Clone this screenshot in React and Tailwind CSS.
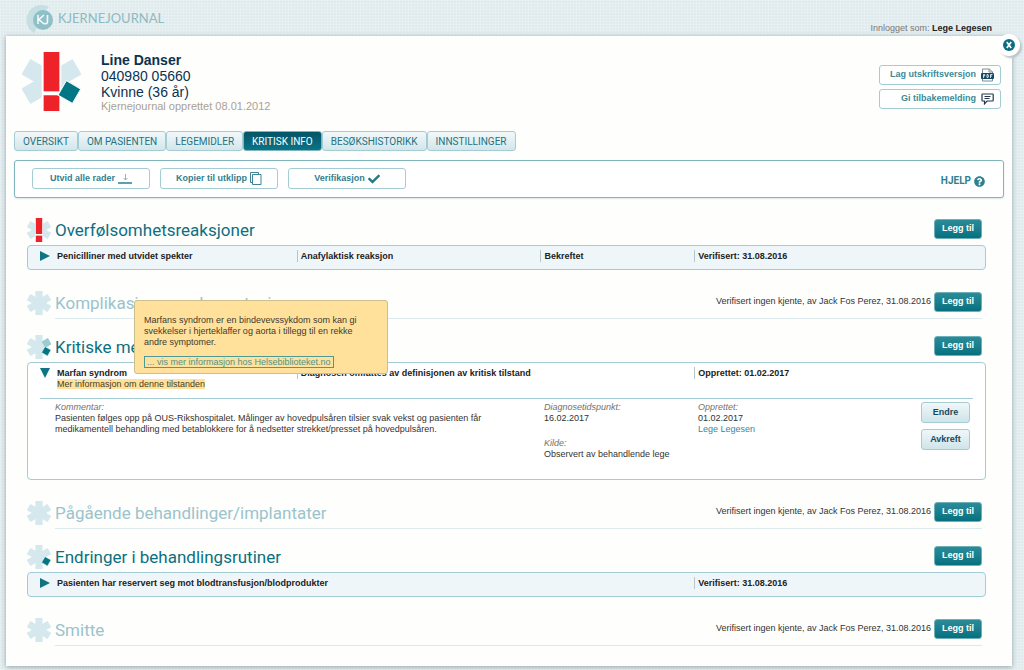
import React, { useState } from "react";
import { FaCheck, FaQuestionCircle } from "react-icons/fa";

const TABS = [
  "OVERSIKT",
  "OM PASIENTEN",
  "LEGEMIDLER",
  "KRITISK INFO",
  "BESØKSHISTORIKK",
  "INNSTILLINGER",
];

const NONE_KNOWN = "Verifisert ingen kjente, av Jack Fos Perez, 31.08.2016";

function Asterisk({ className, alert, marked, double }) {
  return (
    <svg viewBox="0 0 60 60" className={className} aria-hidden="true">
      <g fill="#d5e8ed">
        {!alert && <rect x="21" y="0" width="18" height="60" />}
        <rect x="21" y="0" width="18" height="60" transform="rotate(60 30 30)" />
        <rect x="21" y="0" width="18" height="60" transform="rotate(120 30 30)" />
      </g>
      {alert && (
        <g>
          <rect x="20" y="0" width="20" height="60" fill="#fff" />
          <rect x="22" y="0" width="16" height="40" fill="#ee2229" />
          <rect x="22" y="44" width="16" height="16" fill="#ee2229" />
        </g>
      )}
      {double && (
        <rect x="40" y="11" width="18" height="18" fill="#9ccbd2" transform="rotate(-30 49 20)" />
      )}
      {marked && (
        <rect x="40" y="32" width="17" height="17" fill="#037685" stroke="#fff" strokeWidth="1" transform="rotate(30 48 40)" />
      )}
    </svg>
  );
}

function Logo() {
  return (
    <div className="flex items-center">
      <svg viewBox="0 0 32 32" className="size-8" aria-hidden="true">
        <path d="M23 4A14.500 14.500 0 1 0 8 30l3-5A10 10 0 0 1 19 8z" fill="#c5dfe2" />
        <circle cx="17" cy="17" r="10" fill="#8fc0c8" />
        <path d="M12 12v9M18 12l-5 4.500 5 4.500M21.500 12v6.500q0 3-3.500 2" fill="none" stroke="#f2f9fa" strokeWidth="1.600" />
      </svg>
      <span className="font-['Lato'] text-[13px] text-[#8dbac3]">KJERNEJOURNAL</span>
    </div>
  );
}

function PdfIcon() {
  return (
    <svg viewBox="0 0 13 14" className="h-[14px] w-[13px]" aria-hidden="true">
      <path d="M1.500 1h7l3 3v9h-10z" fill="#fff" stroke="#7d8d95" />
      <path d="M8 1v3h3.500" fill="none" stroke="#7d8d95" />
      <rect x="0" y="5" width="13" height="6" rx="1" fill="#164a61" />
      <path d="M2.500 10V6.500h1.200v1.500H2.500M6 6.500v3h1q1-1.500 0-3zM9.500 10V6.500h2M9.500 8h1.500" fill="none" stroke="#fff" strokeWidth=".8" />
    </svg>
  );
}

function SpeechIcon() {
  return (
    <svg viewBox="0 0 13 12" className="h-3 w-[13px]" fill="none" stroke="#25364a" aria-hidden="true">
      <path d="M1.500 1h10q.7 0 .7.700v5.600q0 .7-.7.700H6l-2.500 2.800V8h-2Q1 8 1 7.300V1.700Q1 1 1.500 1z" strokeWidth="1.200" />
      <path d="M3.500 3.500h6M3.500 5.500h5" />
    </svg>
  );
}

function ExpandIcon() {
  return (
    <svg viewBox="0 0 14 12" className="h-3 w-[14px]" aria-hidden="true">
      <path d="M7.500 1v6M5.500 5l2 2 2-2" fill="none" stroke="#a9a9a9" />
      <rect x="0" y="9" width="14" height="2" fill="#5aa3ad" />
    </svg>
  );
}

function CopyIcon() {
  return (
    <svg viewBox="0 0 12 13" className="h-[13px] w-3" fill="#fff" stroke="#3d8592" aria-hidden="true">
      <path d="M.5.5h8v10h-8z" />
      <path d="M2.500 2.500h8.500v10H2.500z" />
    </svg>
  );
}

function ToolbarButton({ children }) {
  return (
    <button className="flex h-[21px] w-[118px] items-center justify-center gap-[3px] rounded-[3px] border border-[#a3ccd5] bg-white text-[9px] font-bold text-[#32808f]">
      {children}
    </button>
  );
}

function SideButton({ children }) {
  return (
    <button className="flex h-5 w-[122px] items-center justify-end gap-[5px] rounded-[3px] border border-[#a3ccd5] bg-white pr-[6px] text-[9px] font-bold text-[#3b8a98]">
      {children}
    </button>
  );
}

function SmallButton({ children }) {
  return (
    <button className="h-[21px] w-[49px] rounded-[3px] border border-[#a3ccd5] bg-gradient-to-b from-[#f0f7f9] to-[#cfe4e9] text-[9px] font-bold text-[#174a60]">
      {children}
    </button>
  );
}

function Section({ title, icon, status, children }) {
  const empty = Boolean(status);
  return (
    <section className={empty ? "mb-[17px]" : "mb-[22px]"}>
      <div className="flex h-[26px] items-start pr-1">
        <div className="flex h-[22px] flex-1 items-center gap-1">
          {icon}
          <h2
            className={
              "font-['Roboto',sans-serif] text-[17px] leading-[22px] " +
              (empty ? "text-[#9bc3cc]" : "text-[#0c7080]")
            }
          >
            {title}
          </h2>
        </div>
        {empty && <p className="mr-[3px] text-[9px] leading-[18px] text-[#333]">{status}</p>}
        <button className="h-5 w-12 rounded-[3px] border border-[#6db0ba] bg-gradient-to-b from-[#2b8c98] to-[#04707f] text-[9px] font-bold text-white">
          Legg til
        </button>
      </div>
      {empty ? <hr className="ml-7 mr-1 border-[#dbeaee]" /> : children}
    </section>
  );
}

function RowHeader({ cells, open, onToggle }) {
  return (
    <div className="flex">
      <button onClick={onToggle} aria-label="Vis detaljer" className="flex h-[22px] w-[29px] shrink-0 justify-center pl-[5px] pt-[5px]">
        <svg viewBox="0 0 10 10" className="size-[10px]" fill="#0f7585" aria-hidden="true">
          <path d={open ? "M0 0h10L5 10z" : "M0 0l10 5-10 5z"} />
        </svg>
      </button>
      <div className="grid flex-1 grid-cols-[240fr_244fr_154fr_291fr] items-start pt-[4px] text-[9px] font-bold leading-[12px] text-[#222]">
        {cells.map((cell, i) => (
          <div key={i} className={"whitespace-nowrap min-w-0 " + (i > 0 && cell ? "border-l border-[#b5c5c9] pl-[3px]" : "")}>
            {cell}
          </div>
        ))}
      </div>
    </div>
  );
}

function Row({ cells }) {
  const [open, setOpen] = useState(false);
  return (
    <div className="h-[25px] rounded-[4px] border border-[#a3ccd5] bg-[#eff6f9]">
      <RowHeader cells={cells} open={open} onToggle={() => setOpen(!open)} />
    </div>
  );
}

function InfoTip() {
  return (
    <div
      role="tooltip"
      className="absolute bottom-full left-[77px] h-[74px] w-[254px] rounded-[3px] border border-[#c9c08e] bg-[#ffe19c] px-[9px] pt-[14px] text-[9px] leading-[11px] text-[#3f3a2c]"
    >
      <p>
        Marfans syndrom er en bindevevssykdom som kan gi
        <br />
        svekkelser i hjerteklaffer og aorta i tillegg til en rekke
        <br />
        andre symptomer.
      </p>
      <a href="#helsebiblioteket" className="mt-[8px] inline-block border border-[#4c9a93] px-[2px] leading-[10px] text-[#4f9388]">
        ... vis mer informasjon hos Helsebiblioteket.no
      </a>
    </div>
  );
}

function Detail({ label, children }) {
  return (
    <div>
      <dt className="italic text-[#777068]">{label}</dt>
      <dd>{children}</dd>
    </div>
  );
}

function ConditionCard() {
  const [open, setOpen] = useState(true);
  return (
    <div className="min-h-[118px] rounded-[4px] border border-[#a3ccd5] bg-white">
      <RowHeader
        open={open}
        onToggle={() => setOpen(!open)}
        cells={[
          "Marfan syndrom",
          "Diagnosen omfattes av definisjonen av kritisk tilstand",
          "",
          "Opprettet: 01.02.2017",
        ]}
      />
      <div className="relative -mt-[6px] ml-[29px] h-[19px] text-[9px] leading-[11px]">
        <a href="#tilstand" className="bg-[#ffe19c] text-[#4a3d22]">
          Mer informasjon om denne tilstanden
        </a>
        <div className="absolute left-0 top-[-5px]">
          <InfoTip />
        </div>
      </div>
      {open && (
        <div className="ml-3 mr-3 flex border-t border-[#a3ccd5] pl-[15px] pt-[3px] text-[9px] leading-[11px] text-[#333]">
          <dl className="grid flex-1 grid-cols-[489fr_154fr_223fr]">
            <Detail label="Kommentar:">
              Pasienten følges opp på OUS-Rikshospitalet. Målinger av hovedpulsåren tilsier svak vekst og pasienten får
              <br />
              medikamentell behandling med betablokkere for å nedsetter strekket/presset på hovedpulsåren.
            </Detail>
            <div className="flex flex-col gap-[14px]">
              <Detail label="Diagnosetidspunkt:">16.02.2017</Detail>
              <Detail label="Kilde:">Observert av behandlende lege</Detail>
            </div>
            <Detail label="Opprettet:">
              01.02.2017
              <br />
              <a href="#lege" className="text-[#3a87a0]">
                Lege Legesen
              </a>
            </Detail>
          </dl>
          <div className="flex flex-col gap-[6px] pr-[3px]">
            <SmallButton>Endre</SmallButton>
            <SmallButton>Avkreft</SmallButton>
          </div>
        </div>
      )}
    </div>
  );
}

export default function App() {
  const [active, setActive] = useState("KRITISK INFO");

  return (
    <div className="min-h-screen bg-[#e0ebed] bg-[repeating-linear-gradient(0deg,#ffffff30_0_1px,transparent_1px_3px),repeating-linear-gradient(90deg,#ffffff30_0_1px,transparent_1px_3px)] pb-1 font-['Liberation_Sans',Arial,sans-serif]">
      <header className="flex h-9 items-start justify-between pl-[26px] pr-8 pt-[3px]">
        <Logo />
        <p className="pt-[19px] text-[9px] leading-[12px] text-[#777]">
          Innlogget som: <b className="text-[#222]">Lege Legesen</b>
        </p>
      </header>

      <main className="relative ml-[6px] mr-3 bg-[#fefefd] pb-[3px] shadow-[0_1px_5px_#8fa3a8]">
        <button
          aria-label="Lukk"
          className="absolute -top-[2px] right-[-8px] flex size-[22px] items-center justify-center rounded-full bg-white shadow-[2px_2px_2px_#b9c6c9]"
        >
          <svg viewBox="0 0 12 12" className="size-3" aria-hidden="true">
            <circle cx="6" cy="6" r="6" fill="#0a6e7f" />
            <path d="M3.800 3l4.400 6M8.200 3L3.800 9" stroke="#fff" strokeWidth="1.700" />
          </svg>
        </button>

        {/* Patient */}
        <div className="flex items-start pl-4 pr-[11px] pt-4">
          <Asterisk className="size-[59px]" alert marked />
          <div className="flex-1 pl-5 text-[14px] leading-4 text-[#0b3350]">
            <h1 className="font-bold">Line Danser</h1>
            <p>040980 05660</p>
            <p>Kvinne (36 år)</p>
            <p className="text-[11px] leading-[13px] text-[#aaa193]">Kjernejournal opprettet 08.01.2012</p>
          </div>
          <div className="flex flex-col gap-1 pt-[13px]">
            <SideButton>
              Lag utskriftsversjon <PdfIcon />
            </SideButton>
            <SideButton>
              Gi tilbakemelding <SpeechIcon />
            </SideButton>
          </div>
        </div>

        <nav className="ml-2 mt-[18px] flex">
          {TABS.map((tab) => (
            <button
              key={tab}
              onClick={() => setActive(tab)}
              className={
                "h-5 rounded-[3px] border px-[8px] font-['Roboto',sans-serif] text-[10px] " +
                (tab === active
                  ? "border-[#7fb5c0] bg-gradient-to-b from-[#055468] to-[#0a7586] text-white"
                  : "border-[#a3ccd5] bg-gradient-to-b from-[#f2f8fa] to-[#d3e6ea] text-[#1d7382]")
              }
            >
              {tab}
            </button>
          ))}
        </nav>

        <div className="ml-2 mr-2 mt-[9px] flex h-[38px] items-start gap-[10px] rounded-[3px] border border-[#7fb5bd] bg-white pl-[17px] pr-[18px] pt-[7px] shadow-[0_1px_2px_#dde6e8]">
          <ToolbarButton>
            Utvid alle rader <ExpandIcon />
          </ToolbarButton>
          <ToolbarButton>
            Kopier til utklipp <CopyIcon />
          </ToolbarButton>
          <ToolbarButton>
            Verifikasjon <FaCheck size={12} color="#1f7d84" />
          </ToolbarButton>
          <a
            href="#hjelp"
            className="ml-auto mt-[7px] flex items-center gap-[3px] font-['Roboto',sans-serif] text-[10px] font-bold leading-[12px] text-[#2c8090]"
          >
            HJELP <FaQuestionCircle size={11} />
          </a>
        </div>

        {/* Critical info */}
        <div className="ml-[21px] mr-[26px] mt-[21px]">
          <Section title="Overfølsomhetsreaksjoner" icon={<Asterisk className="size-6" alert />}>
            <Row
              cells={[
                "Penicilliner med utvidet spekter",
                "Anafylaktisk reaksjon",
                "Bekreftet",
                "Verifisert: 31.08.2016",
              ]}
            />
          </Section>
          <Section title="Komplikasjoner ved anestesi" icon={<Asterisk className="size-6" />} status={NONE_KNOWN} />
          <Section title="Kritiske medisinske tilstander" icon={<Asterisk className="size-6" marked double />}>
            <ConditionCard />
          </Section>
          <Section title="Pågående behandlinger/implantater" icon={<Asterisk className="size-6" />} status={NONE_KNOWN} />
          <Section title="Endringer i behandlingsrutiner" icon={<Asterisk className="size-6" marked />}>
            <Row cells={["Pasienten har reservert seg mot blodtransfusjon/blodprodukter", "", "", "Verifisert: 31.08.2016"]} />
          </Section>
          <Section title="Smitte" icon={<Asterisk className="size-6" />} status={NONE_KNOWN} />
        </div>
      </main>
    </div>
  );
}
